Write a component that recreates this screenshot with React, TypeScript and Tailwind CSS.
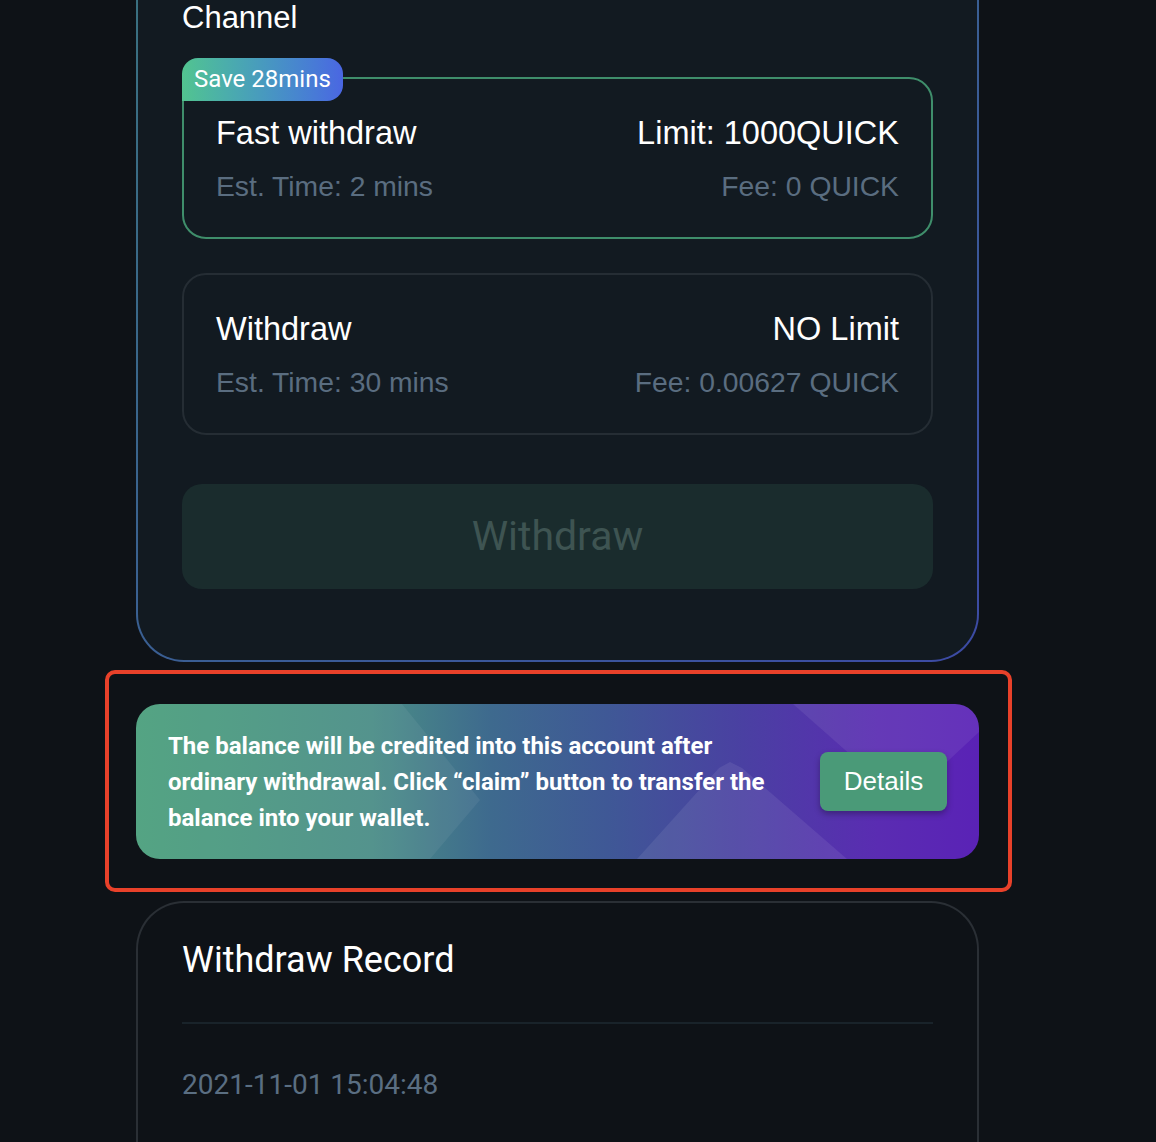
import React from 'react';

const SANS = "font-['Liberation_Sans',Arial,sans-serif]";
const ROBOTO = "font-['Roboto','Liberation_Sans',sans-serif]";

type Channel = {
  title: string;
  limit: string;
  time: string;
  fee: string;
  badge?: string;
};

const channels: Channel[] = [
  { title: 'Fast withdraw', limit: 'Limit: 1000QUICK', time: 'Est. Time: 2 mins', fee: 'Fee: 0 QUICK', badge: 'Save 28mins' },
  { title: 'Withdraw', limit: 'NO Limit', time: 'Est. Time: 30 mins', fee: 'Fee: 0.00627 QUICK' },
];

function ChannelCard({ item }: { item: Channel }) {
  const active = !!item.badge;
  return (
    <div
      className={`relative h-[162px] rounded-[24px] border-2 px-[32px] pt-[34px] ${
        active ? 'border-[#3f8e6b]' : 'border-[#252d34]'
      }`}
    >
      {item.badge && (
        <div
          className={`absolute -left-[2px] -top-[21px] h-[43px] rounded-t-[16px] rounded-br-[16px] bg-gradient-to-r from-[#52c48f] to-[#4a66e2] px-[12px] text-[24px] leading-[43px] text-white ${ROBOTO}`}
        >
          {item.badge}
        </div>
      )}
      <div className={`flex items-center justify-between text-[32.5px] leading-[40px] text-white ${SANS}`}>
        <span>{item.title}</span>
        <span>{item.limit}</span>
      </div>
      <div className={`mt-[16px] flex items-center justify-between text-[28.3px] leading-[34px] text-[#5a6d80] ${SANS}`}>
        <span>{item.time}</span>
        <span>{item.fee}</span>
      </div>
    </div>
  );
}

function Banner() {
  return (
    <div className="relative flex h-[155px] w-[843px] items-center justify-between overflow-hidden rounded-[24px] bg-[linear-gradient(90deg,#4a9f7c_0%,#4a8d86_28%,#3e6a8e_42%,#3f5896_56%,#4a40a2_72%,#5a2cb2_88%,#5a22b6_100%)] pl-[32px] pr-[32px]">
      {/* decorative facets */}
      <svg className="pointer-events-none absolute inset-0" width="843" height="155" viewBox="0 0 843 155">
        <polygon points="0,0 266,0 344,96 294,155 0,155" fill="#ffffff" fillOpacity="0.06" />
        <polygon points="583,64 594,58 606,64 711,155 501,155" fill="#ffffff" fillOpacity="0.08" />
        <polygon points="657,0 843,0 843,28 768,98" fill="#ffffff" fillOpacity="0.07" />
      </svg>
      <p className={`relative w-[630px] text-[24px] font-bold leading-[36px] text-white ${ROBOTO}`}>
        The balance will be credited into this account after ordinary withdrawal. Click “claim” button to transfer the balance into your wallet.
      </p>
      <button
        className={`relative h-[59px] w-[127px] rounded-[8px] bg-[#4a9a78] text-[26px] text-white shadow-[0_3px_6px_rgba(0,0,0,0.3)] ${SANS}`}
      >
        Details
      </button>
    </div>
  );
}

export default function App() {
  return (
    <div className="min-h-screen w-full overflow-hidden bg-[#0e1217]">
      <div className="ml-[136px] flex w-[843px] flex-col">
        {/* Channel card */}
        <div className="rounded-b-[48px] bg-gradient-to-br from-[#3a7080] to-[#3c4aa4] px-[2px] pb-[2px]">
          <div className="rounded-b-[46px] bg-[#121a21] px-[44px] pb-[71px]">
            <h2 className={`text-[31px] leading-[36px] text-white ${SANS}`}>Channel</h2>
            <div className="mt-[41px] flex flex-col gap-[34px]">
              {channels.map((c) => (
                <ChannelCard key={c.title} item={c} />
              ))}
            </div>
            <button
              className={`mt-[49px] h-[105px] w-full rounded-[20px] bg-[#1a2c2d] text-[41px] text-[#3e5452] ${ROBOTO}`}
            >
              Withdraw
            </button>
          </div>
        </div>

        {/* highlighted banner */}
        <div className="-ml-[31px] mt-[8px] w-[907px] rounded-[10px] border-4 border-[#e8412a] pb-[29px] pl-[27px] pr-[29px] pt-[30px]">
          <Banner />
        </div>

        {/* Withdraw record */}
        <div className="mt-[9px] h-[260px] rounded-t-[48px] border-2 border-b-0 border-[#2a2f35] bg-[#0e1217] px-[44px] pt-[35px]">
          <h2 className={`text-[36px] leading-[44px] text-white ${ROBOTO}`}>Withdraw Record</h2>
          <div className="mt-[40px] h-[2px] bg-[#19232a]" />
          <div className={`mt-[43px] text-[28px] leading-[36px] text-[#5a6e82] ${ROBOTO}`}>2021-11-01 15:04:48</div>
        </div>
      </div>
    </div>
  );
}
